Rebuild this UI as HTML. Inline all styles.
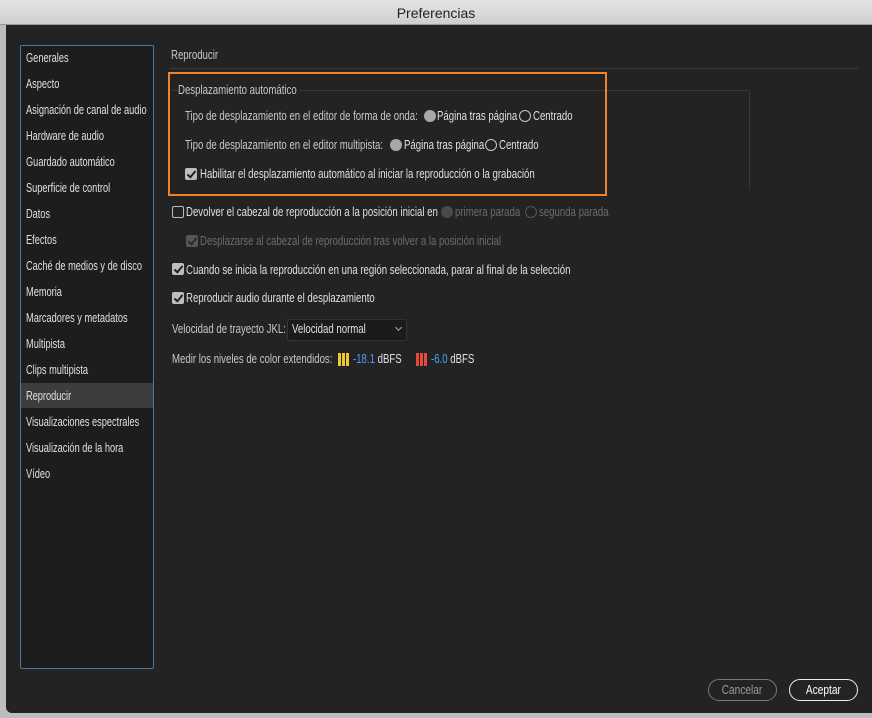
<!DOCTYPE html>
<html><head><meta charset="utf-8"><style>
*{margin:0;padding:0;box-sizing:border-box}
body{width:872px;height:718px;overflow:hidden;background:#bdbdbd;font-family:"Liberation Sans",sans-serif;position:relative}
.title{position:absolute;left:0;top:0;width:872px;height:25px;background:linear-gradient(#e4e4e4,#cfcfcf);border-bottom:1px solid #9a9a9a}
.title span{position:absolute;left:0;right:0;top:5px;text-align:center;font-size:14px;color:#222}
.win{position:absolute;left:6px;top:25px;width:866px;height:688px;background:#232323;border-bottom-left-radius:6px}
.side{position:absolute;left:20px;top:45px;width:134px;height:624px;background:#1d1d1d;border:1px solid #4a76ab;border-radius:2px}
.t{position:absolute;white-space:nowrap;font-size:13px;color:#e0e0e0;transform:scaleX(.74);transform-origin:left center;line-height:16px}
.s{transform:scaleX(.71)}
.d{color:#6c6c6c}
.sel{position:absolute;left:21px;top:383px;width:132px;height:25px;background:#3d3d3d}
.cb{position:absolute;width:12px;height:12px;border-radius:2px}
.cb.on{background:#bdbdbd}
.cb.on::after{content:"";position:absolute;left:4px;top:1px;width:3px;height:7px;border:solid #222;border-width:0 2px 2px 0;transform:rotate(40deg)}
.cb.off{border:1.5px solid #bdbdbd}
.cb.dis{background:#555}
.cb.dis::after{content:"";position:absolute;left:4px;top:1px;width:3px;height:7px;border:solid #2a2a2a;border-width:0 2px 2px 0;transform:rotate(40deg)}
.r{position:absolute;width:12px;height:12px;border-radius:50%}
.r.on{background:#a8a8a8}
.r.off{border:1.5px solid #c8c8c8}
.r.don{background:#4a4a4a}
.r.doff{border:1.5px solid #555}
.btn{position:absolute;height:22px;border-radius:11px;font-size:13px;text-align:center;line-height:19px}
</style></head><body>
<div class="title"><span>Preferencias</span></div>
<div class="win"></div>
<div class="side"></div>
<div class="sel"></div>
<div class="t s" style="left:26px;top:50px">Generales</div>
<div class="t s" style="left:26px;top:76px">Aspecto</div>
<div class="t s" style="left:26px;top:102px">Asignación de canal de audio</div>
<div class="t s" style="left:26px;top:128px">Hardware de audio</div>
<div class="t s" style="left:26px;top:154px">Guardado automático</div>
<div class="t s" style="left:26px;top:180px">Superficie de control</div>
<div class="t s" style="left:26px;top:206px">Datos</div>
<div class="t s" style="left:26px;top:232px">Efectos</div>
<div class="t s" style="left:26px;top:258px">Caché de medios y de disco</div>
<div class="t s" style="left:26px;top:284px">Memoria</div>
<div class="t s" style="left:26px;top:310px">Marcadores y metadatos</div>
<div class="t s" style="left:26px;top:336px">Multipista</div>
<div class="t s" style="left:26px;top:362px">Clips multipista</div>
<div class="t s" style="left:26px;top:388px">Reproducir</div>
<div class="t s" style="left:26px;top:414px">Visualizaciones espectrales</div>
<div class="t s" style="left:26px;top:440px">Visualización de la hora</div>
<div class="t s" style="left:26px;top:466px">Vídeo</div>

<div class="t" style="left:171px;top:47px;color:#c8c8c8">Reproducir</div>
<div style="position:absolute;left:170px;top:68px;width:688px;height:1px;background:#3a3a3a"></div>
<div style="position:absolute;left:172px;top:90px;width:578px;height:100px;border:1px solid #383838;border-left:none;border-bottom:none"></div>
<div style="position:absolute;left:168px;top:72px;width:439px;height:124px;border:2px solid #f0822a"></div>
<div class="t" style="left:178px;top:82px;color:#c8c8c8;background:#232323;padding-right:4px">Desplazamiento automático</div>

<div class="t" style="left:185px;top:108px;color:#c8c8c8">Tipo de desplazamiento en el editor de forma de onda:</div>
<div class="r on" style="left:424px;top:110px"></div>
<div class="t" style="left:437px;top:108px">Página tras página</div>
<div class="r off" style="left:519px;top:110px"></div>
<div class="t" style="left:533px;top:108px">Centrado</div>

<div class="t" style="left:185px;top:137px;color:#c8c8c8">Tipo de desplazamiento en el editor multipista:</div>
<div class="r on" style="left:390px;top:139px"></div>
<div class="t" style="left:404px;top:137px">Página tras página</div>
<div class="r off" style="left:485px;top:139px"></div>
<div class="t" style="left:499px;top:137px">Centrado</div>

<div class="cb on" style="left:185px;top:168px"></div>
<div class="t" style="left:200px;top:166px">Habilitar el desplazamiento automático al iniciar la reproducción o la grabación</div>

<div class="cb off" style="left:172px;top:206px"></div>
<div class="t" style="left:186px;top:204px">Devolver el cabezal de reproducción a la posición inicial en</div>
<div class="r don" style="left:441px;top:206px"></div>
<div class="t d" style="left:455px;top:204px">primera parada</div>
<div class="r doff" style="left:525px;top:206px"></div>
<div class="t d" style="left:539px;top:204px">segunda parada</div>

<div class="cb dis" style="left:186px;top:235px"></div>
<div class="t d" style="left:200px;top:233px">Desplazarse al cabezal de reproducción tras volver a la posición inicial</div>

<div class="cb on" style="left:172px;top:263px"></div>
<div class="t" style="left:186px;top:262px">Cuando se inicia la reproducción en una región seleccionada, parar al final de la selección</div>
<div class="cb on" style="left:172px;top:292px"></div>
<div class="t" style="left:186px;top:290px">Reproducir audio durante el desplazamiento</div>

<div class="t" style="left:172px;top:321px;color:#c8c8c8">Velocidad de trayecto JKL:</div>
<div style="position:absolute;left:287px;top:319px;width:120px;height:22px;background:#1b1b1b;border:1px solid #333;border-radius:2px"></div>
<div class="t" style="left:292px;top:321px">Velocidad normal</div>
<div style="position:absolute;left:396px;top:325px;width:5px;height:5px;border:solid #aaa;border-width:0 1px 1px 0;transform:rotate(45deg)"></div>

<div class="t" style="left:172px;top:351px;color:#c8c8c8">Medir los niveles de color extendidos:</div>
<div style="position:absolute;left:338px;top:353px;width:11px;height:13px;background:repeating-linear-gradient(90deg,#f0c832 0 3px,transparent 3px 4px)"></div>
<div class="t" style="left:353px;top:351px"><span style="color:#4aa0ff">-18.1</span> dBFS</div>
<div style="position:absolute;left:416px;top:353px;width:11px;height:13px;background:repeating-linear-gradient(90deg,#e84a3a 0 3px,transparent 3px 4px)"></div>
<div class="t" style="left:431px;top:351px"><span style="color:#4aa0ff">-6.0</span> dBFS</div>

<div class="btn" style="left:708px;top:679px;width:69px;border:1.5px solid #777;color:#999"><span style="display:inline-block;transform:scaleX(.78)">Cancelar</span></div>
<div class="btn" style="left:789px;top:679px;width:69px;border:1.5px solid #eee;color:#fff"><span style="display:inline-block;transform:scaleX(.78)">Aceptar</span></div>
</body></html>
